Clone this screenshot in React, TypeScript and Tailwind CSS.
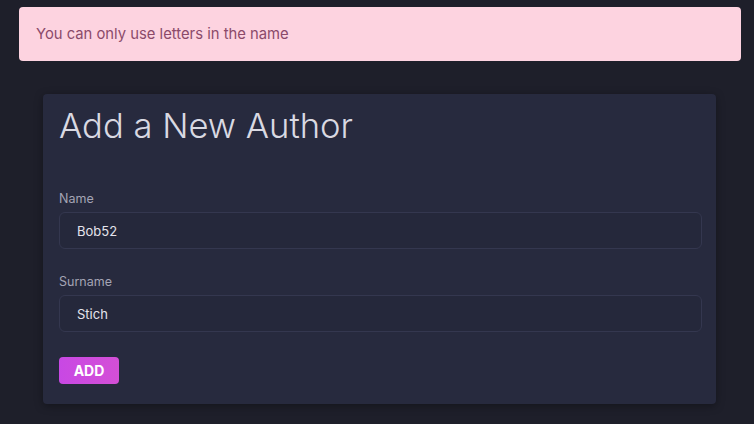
export default function App() {
  return (
    <div
      className="min-h-[424px] w-full bg-[#1e1f2a] pt-[7px]"
      style={{ fontFamily: "Inter, 'Noto Sans', sans-serif" }}
    >
      {/* error alert */}
      <div className="ml-[19px] flex h-[54px] w-[722px] items-center rounded-[4px] bg-[#fdd3e0] px-[17px] text-[14.8px] text-[#8b4a6a]">
        You can only use letters in the name
      </div>

      {/* form card */}
      <div className="ml-[43px] mt-[33px] w-[673px] rounded-[4px] bg-[#272a3e] px-[16px] pb-[20px] pt-[6px] shadow-[0_2px_8px_rgba(0,0,0,0.35)]">
        <h1 className="text-[34.6px] font-light leading-[50px] text-[#d9d9e2]">
          Add a New Author
        </h1>

        <div className="mt-[40px] flex flex-col">
          <label className="text-[12.5px] leading-[18px] text-[#a4a4b4]">Name</label>
          <input
            readOnly
            value="Bob52"
            className="mt-[4px] h-[37px] w-[643px] rounded-[6px] border border-[#34374f] bg-[#25283b] px-[17px] text-[13px] text-[#e4e4ec] outline-none"
          />

          <label className="mt-[24px] text-[12.5px] leading-[18px] text-[#a4a4b4]">Surname</label>
          <input
            readOnly
            value="Stich"
            className="mt-[4px] h-[37px] w-[643px] rounded-[6px] border border-[#34374f] bg-[#25283b] px-[17px] text-[13px] text-[#e4e4ec] outline-none"
          />
        </div>

        <button className="mt-[25px] h-[27px] w-[60px] rounded-[4px] bg-gradient-to-r from-[#c848e4] to-[#d44fd6] text-[14px] font-bold text-white">
          ADD
        </button>
      </div>
    </div>
  );
}
